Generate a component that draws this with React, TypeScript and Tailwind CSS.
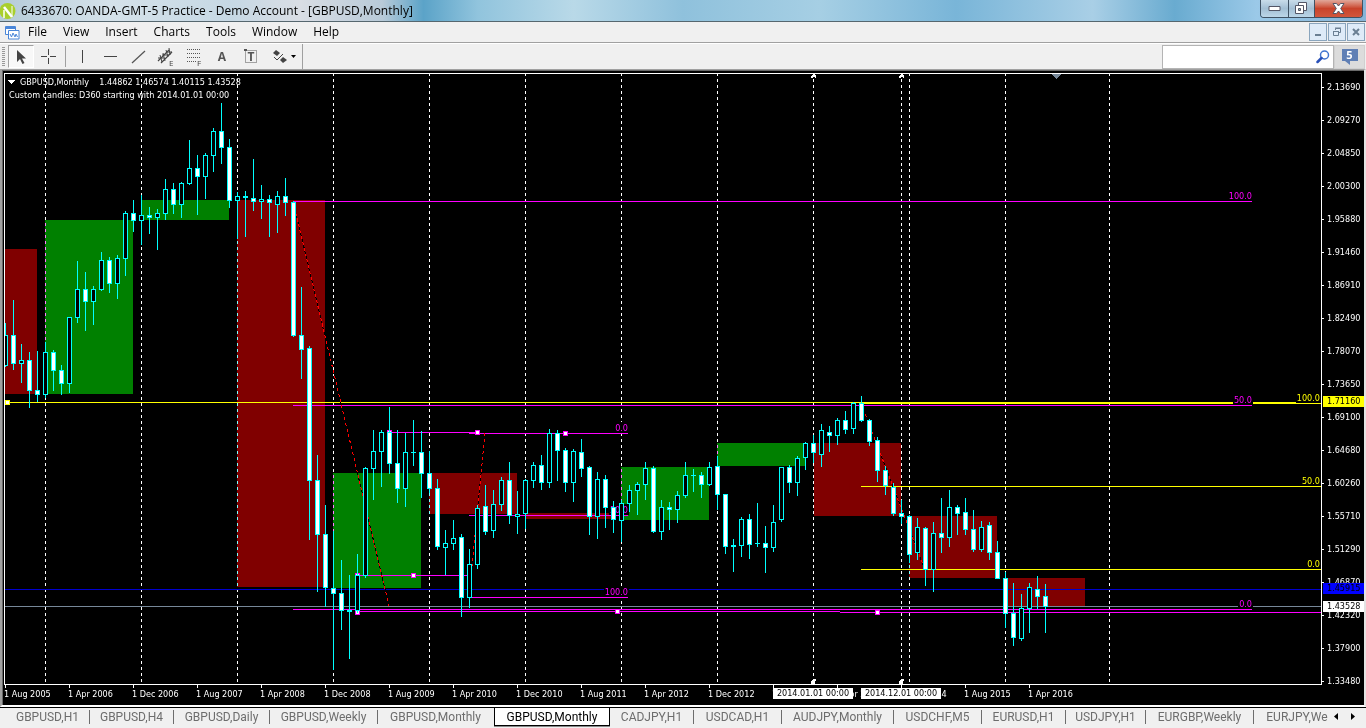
import { useState } from "react"

type Candle = [number, number, number, number, number]

// [high, body top, body bottom, low, kind] — kind: 0 = hollow (up), 1 = filled (down)
const candles: Candle[] = [
  [323, 335, 366, 367, 0], [300, 335, 364, 370, 1], [344, 360, 364, 383, 0], [352, 360, 391, 408, 1],
  [351, 390, 395, 402, 1], [342, 352, 395, 398, 0], [350, 352, 371, 391, 1], [365, 370, 384, 395, 1],
  [317, 317, 384, 393, 0], [261, 289, 318, 323, 0], [272, 289, 302, 331, 1], [286, 289, 302, 325, 0],
  [252, 260, 290, 291, 0], [257, 260, 284, 293, 1], [255, 258, 284, 299, 0], [211, 213, 259, 276, 0],
  [200, 213, 221, 232, 1], [195, 215, 221, 245, 0], [207, 215, 218, 234, 1], [209, 213, 218, 250, 0],
  [179, 189, 214, 220, 0], [183, 189, 205, 214, 1], [182, 183, 205, 218, 0], [140, 168, 184, 185, 0],
  [155, 168, 177, 215, 1], [153, 155, 177, 199, 0], [128, 131, 156, 172, 0], [103, 131, 148, 164, 1],
  [139, 147, 201, 208, 1], [192, 196, 201, 239, 0], [191, 196, 198, 237, 0], [159, 198, 202, 211, 1],
  [185, 199, 202, 219, 0], [195, 199, 203, 237, 1], [191, 196, 205, 233, 0], [178, 196, 203, 216, 1],
  [201, 202, 336, 337, 1], [287, 335, 350, 379, 1], [346, 348, 481, 540, 1], [455, 480, 535, 592, 1],
  [505, 534, 588, 607, 1], [531, 588, 594, 670, 1], [560, 593, 611, 630, 1], [575, 610, 612, 659, 0],
  [554, 575, 611, 613, 0], [467, 468, 576, 578, 0], [430, 451, 469, 500, 0], [430, 432, 452, 487, 0],
  [407, 432, 464, 474, 1], [430, 463, 489, 503, 1], [433, 452, 489, 507, 0], [420, 452, 453, 466, 0],
  [431, 452, 474, 498, 1], [451, 473, 489, 493, 1], [479, 488, 547, 550, 1], [530, 543, 548, 575, 0],
  [520, 538, 544, 550, 0], [534, 537, 598, 617, 1], [549, 564, 598, 608, 0], [505, 508, 565, 569, 0],
  [485, 506, 532, 535, 1], [490, 504, 531, 538, 0], [477, 480, 505, 511, 0], [462, 480, 516, 524, 1],
  [491, 514, 517, 534, 0], [479, 480, 514, 529, 0], [462, 465, 481, 488, 0], [455, 465, 483, 490, 1],
  [429, 433, 483, 488, 0], [430, 433, 451, 481, 1], [448, 450, 483, 492, 1], [449, 451, 483, 502, 0],
  [439, 452, 469, 477, 1], [466, 467, 517, 535, 1], [472, 479, 517, 539, 0], [475, 479, 508, 528, 1],
  [501, 507, 520, 533, 1], [500, 503, 521, 542, 0], [485, 490, 504, 512, 0], [482, 484, 491, 515, 0],
  [462, 468, 485, 500, 0], [466, 468, 532, 533, 1], [500, 507, 532, 540, 0], [502, 507, 510, 530, 1],
  [491, 495, 510, 523, 0], [462, 475, 496, 498, 0], [469, 475, 476, 492, 0], [472, 475, 485, 498, 1],
  [462, 467, 485, 486, 0], [456, 466, 495, 510, 1], [494, 494, 547, 554, 1], [539, 545, 547, 572, 0],
  [517, 519, 546, 557, 0], [514, 519, 545, 559, 1], [503, 543, 544, 547, 0], [526, 543, 548, 573, 1],
  [505, 522, 548, 552, 0], [467, 467, 520, 522, 0], [465, 467, 483, 493, 1], [456, 458, 483, 496, 0],
  [442, 443, 458, 470, 0], [435, 443, 453, 463, 1], [424, 430, 455, 467, 0], [426, 432, 436, 452, 1],
  [418, 420, 436, 445, 0], [411, 420, 430, 434, 1], [402, 403, 429, 434, 0], [396, 403, 421, 422, 1],
  [419, 420, 442, 446, 1], [437, 440, 471, 482, 1], [466, 470, 486, 495, 1], [483, 487, 514, 516, 1],
  [500, 513, 517, 524, 1], [515, 516, 555, 563, 1], [518, 527, 553, 560, 0], [527, 528, 570, 586, 1],
  [522, 533, 570, 592, 0], [498, 533, 538, 553, 1], [490, 507, 538, 547, 0], [505, 507, 514, 535, 1],
  [498, 512, 530, 535, 1], [510, 529, 550, 552, 1], [521, 527, 550, 552, 0], [522, 525, 553, 560, 1],
  [541, 552, 579, 579, 1], [572, 578, 614, 628, 1], [583, 613, 638, 646, 1], [594, 608, 639, 641, 0],
  [583, 587, 609, 633, 0], [576, 589, 597, 609, 1], [584, 596, 607, 633, 1],
]

const RED = "#800000"
const GREEN = "#008000"
const MAGENTA = "#ff00ff"
const YELLOW = "#ffff00"

// yearly custom candles: [x, width, top, bottom, colour]
const blocks: [number, number, number, number, string][] = [
  [5, 32, 249, 394, RED],
  [45, 88, 220, 394, GREEN],
  [141, 88, 200, 220, GREEN],
  [237, 88, 200, 587, RED],
  [333, 88, 473, 588, GREEN],
  [429, 88, 473, 514, RED],
  [525, 88, 513, 519, RED],
  [621, 88, 467, 520, GREEN],
  [717, 88, 443, 466, GREEN],
  [814, 87, 443, 516, RED],
  [909, 88, 516, 578, RED],
  [1005, 80, 578, 606, RED],
]

const periods = [45, 141, 237, 333, 429, 525, 621, 717, 813, 901, 909, 1005, 1109]

// [x1, x2, y, thickness, colour]
const levels: [number, number, number, number, string][] = [
  [5, 1321, 589, 1, "#0000cd"],
  [5, 1321, 606, 1, "#778899"],
  [5, 1321, 402, 1, YELLOW],
  [861, 1321, 402, 2, YELLOW],
  [861, 1321, 486, 1, YELLOW],
  [861, 1321, 569, 1, YELLOW],
  [293, 1252, 201, 1, MAGENTA],
  [293, 1252, 405, 1, MAGENTA],
  [293, 1252, 609, 1, MAGENTA],
  [357, 840, 611, 1, MAGENTA],
  [840, 1321, 612, 1, MAGENTA],
  [389, 478, 432, 1, MAGENTA],
  [469, 628, 433, 1, MAGENTA],
  [469, 628, 515, 1, MAGENTA],
  [357, 469, 575, 1, MAGENTA],
  [469, 628, 597, 1, MAGENTA],
]

// [right edge, line y, width, text, colour]
const levelLabels: [number, number, number, string, string][] = [
  [1252, 201, 24, "100.0", MAGENTA],
  [1252, 405, 19, "50.0", MAGENTA],
  [1252, 609, 14, "0.0", MAGENTA],
  [628, 433, 14, "0.0", MAGENTA],
  [628, 515, 19, "50.0", MAGENTA],
  [628, 597, 24, "100.0", MAGENTA],
  [1320, 403, 24, "100.0", YELLOW],
  [1320, 486, 19, "50.0", YELLOW],
  [1320, 569, 14, "0.0", YELLOW],
]

const handles: [number, number, string][] = [
  [7, 402, YELLOW],
  [389, 432, MAGENTA],
  [477, 432, MAGENTA],
  [565, 433, MAGENTA],
  [357, 575, MAGENTA],
  [413, 575, MAGENTA],
  [357, 612, MAGENTA],
  [617, 611, MAGENTA],
  [877, 612, MAGENTA],
]

const trends = [
  [293, 201, 389, 606],
  [469, 597, 485, 433],
  [861, 403, 925, 570],
]

const prices = [
  "2.13690", "2.09270", "2.04850", "2.00300", "1.95880", "1.91460", "1.86910", "1.82490", "1.78070", "1.73650",
  "1.69100", "1.64680", "1.60260", "1.55710", "1.51290", "1.46870", "1.42320", "1.37900", "1.33480",
]

const dates = [
  "1 Aug 2005", "1 Apr 2006", "1 Dec 2006", "1 Aug 2007", "1 Apr 2008", "1 Dec 2008", "1 Aug 2009", "1 Apr 2010",
  "1 Dec 2010", "1 Aug 2011", "1 Apr 2012", "1 Dec 2012", "1 Aug 2013", "1 Apr 2014", "1 Dec 2014", "1 Aug 2015",
  "1 Apr 2016",
]

const tabs = [
  { name: "GBPUSD,H1", width: "w-[84px]" },
  { name: "GBPUSD,H4", width: "w-[84px]" },
  { name: "GBPUSD,Daily", width: "w-[96px]" },
  { name: "GBPUSD,Weekly", width: "w-[108px]" },
  { name: "GBPUSD,Monthly", width: "w-[116px]" },
  { name: "GBPUSD,Monthly", width: "w-[116px]" },
  { name: "CADJPY,H1", width: "w-[84px]" },
  { name: "USDCAD,H1", width: "w-[88px]" },
  { name: "AUDJPY,Monthly", width: "w-[112px]" },
  { name: "USDCHF,M5", width: "w-[88px]" },
  { name: "EURUSD,H1", width: "w-[84px]" },
  { name: "USDJPY,H1", width: "w-[80px]" },
  { name: "EURGBP,Weekly", width: "w-[108px]" },
  { name: "EURJPY,Weekly", width: "w-[108px]" },
]

const menus = ["File", "View", "Insert", "Charts", "Tools", "Window", "Help"]

const tools = [
  {
    name: "Vertical line",
    icon: <path d="M10.500 4v13" stroke="#444" />,
  },
  {
    name: "Horizontal line",
    icon: <path d="M4 10.500h13" stroke="#444" />,
  },
  {
    name: "Trendline",
    icon: <path d="M4 17L17 5" stroke="#555" strokeWidth="1.2" />,
  },
  {
    name: "Equidistant channel",
    icon: (
      <>
        <path d="M2 15L13 4M5 17L16 6" stroke="#444" strokeWidth="1.2" />
        <path d="M4 9l2 7M7 7l2 8M10 4l2 7M13 2l1 7M2 12h6M6 9h7M10 6h6" stroke="#444" />
        <text x="13" y="20" fill="#444" className="text-[8px]">E</text>
      </>
    ),
  },
  {
    name: "Fibonacci retracement",
    icon: (
      <>
        <path d="M3 3.500h14M3 7.500h14M3 11.500h14M3 15.500h9" stroke="#555" strokeDasharray="1 1" />
        <text x="13" y="20" fill="#444" className="text-[8px]">F</text>
      </>
    ),
  },
  {
    name: "Text",
    icon: <text x="10" y="15" textAnchor="middle" fill="#555" className="text-[12px] font-bold">A</text>,
  },
  {
    name: "Text label",
    icon: (
      <>
        <path d="M5.500 4.500h11v12h-11z" stroke="#555" strokeDasharray="1 1" />
        <path d="M4 3h3v2h-3z" fill="#555" />
        <text x="11" y="15" textAnchor="middle" fill="#555" className="text-[12px] font-bold">T</text>
      </>
    ),
  },
]

function HeaderLogo() {
  return (
    <svg className="shrink-0" width="17" height="18" viewBox="0 0 17 18" aria-hidden="true">
      <circle cx="7.500" cy="9" r="8" fill="#a9cf2c" />
      <path d="M4 8v8" stroke="#fff" strokeWidth="1.500" />
      <path d="M4 5l8 10" stroke="#fff" strokeWidth="2.500" />
      <path d="M12 4v11" stroke="#fff" strokeWidth="1" />
    </svg>
  )
}

function TitleBar() {
  return (
    <header className="flex h-[22px] shrink-0 items-start justify-between border-b border-[#56676f] bg-[linear-gradient(90deg,#b5cbd8_0%,#d5e2ea_8%,#c6d8e4_17%,#d9dde4_22%,#b8cad8_28%,#5ba3c8_31%,#91c4dd_35%,#b9d9e8_42%,#8fc1dc_50%,#a6cfe4_60%,#79b5d8_70%,#a9cfe6_80%,#69abd0_86%,#9bc9e8_92%,#86b4d8_100%)]">
      <h1 className="flex items-center gap-1 pt-0.5 text-[12px] leading-[18px] text-black">
        <HeaderLogo />
        6433670: OANDA-GMT-5 Practice - Demo Account - [GBPUSD,Monthly]
      </h1>
      <div className="mr-[3px] flex h-[18px] overflow-hidden rounded-b border border-t-0 border-[#3f5264]">
        <button aria-label="Minimize" className="flex w-7 items-center justify-center border-r border-[#3f5264] bg-linear-to-b from-[#c9dcea] via-[#a3bfd4] to-[#bcd6e8]">
          <svg width="13" height="7" viewBox="0 0 13 7"><path d="M1 1.500h11v4H1z" fill="#fff" stroke="#535666" /></svg>
        </button>
        <button aria-label="Restore" className="flex w-[26px] items-center justify-center border-r border-[#3f5264] bg-linear-to-b from-[#c9dcea] via-[#a3bfd4] to-[#bcd6e8]">
          <svg width="13" height="13" viewBox="0 0 13 13" fill="#fff" stroke="#535666">
            <path d="M3.500 .5h8v8h-8z" />
            <path d="M.5 3.500h8v8h-8z" />
            <path d="M3.500 6.500h2v2h-2z" fill="#9bb" />
          </svg>
        </button>
        <button aria-label="Close" className="flex w-[47px] items-center justify-center bg-linear-to-b from-[#e0a79a] via-[#c8432b] to-[#d1563c]">
          <svg width="13" height="11" viewBox="0 0 13 11">
            <path d="M1 .5h3.500l2 2.500l2-2.500H12L8.700 5.500L12 10.500H8.500l-2-2.500l-2 2.500H1l3.300-5z" fill="#fff" stroke="#535666" />
          </svg>
        </button>
      </div>
    </header>
  )
}

function MenuBar() {
  const button = "flex h-[18px] w-[18px] items-center justify-center border border-[#8aa5bd] bg-[#deebf8]"
  return (
    <div className="flex h-[21px] shrink-0 items-center justify-between border-b border-[#a0a0a0] bg-[#f0f0f0]">
      <nav className="flex items-center text-[12px] leading-[18px] text-black">
        <svg className="mr-2 ml-[5px]" width="15" height="15" viewBox="0 0 15 15" fill="#fff" stroke="#4a86d8">
          <path d="M.5 1.500h10v8H.5z" />
          <path d="M.5 3h10" strokeWidth="2" />
          <path d="M3.500 5.500h10.500v8.500H3.500z" />
          <path d="M5 9l1.500 3L8 8l2 4l1-3l1.500 3" fill="none" />
        </svg>
        <div className="flex gap-4">
          {menus.map((menu) => (
            <button key={menu}>{menu}</button>
          ))}
        </div>
      </nav>
      <div className="flex gap-px pr-px">
        <button aria-label="Minimize chart" className={button}>
          <svg width="10" height="10" viewBox="0 0 10 10"><path d="M2 8h6" stroke="#6a7f93" strokeWidth="2" /></svg>
        </button>
        <button aria-label="Restore chart" className={button}>
          <svg width="10" height="10" viewBox="0 0 10 10" fill="none" stroke="#6a7f93">
            <path d="M3.500 3V1.500h5v4H7M3 1h6" />
            <path d="M1.500 4.500h5v4h-5zM1 4.500h6" />
          </svg>
        </button>
        <button aria-label="Close chart" className={button}>
          <svg width="10" height="10" viewBox="0 0 10 10"><path d="M2 2l6 6M8 2l-6 6" stroke="#6a7f93" strokeWidth="2" /></svg>
        </button>
      </div>
    </div>
  )
}

function ToolBar() {
  return (
    <div className="flex h-[26px] shrink-0 items-center justify-between border-t border-white bg-[#f0f0f0]">
      <div className="flex h-full items-center border-r border-[#a0a0a0]">
        <svg className="mr-[3px] ml-0.5" width="3" height="20" viewBox="0 0 3 20"><path d="M1.500 0v20" stroke="#999" strokeWidth="3" strokeDasharray="1 1" /></svg>
        <button aria-label="Cursor" className="flex h-[23px] w-[26px] items-center justify-center border border-[#a0a0a0] border-r-white border-b-white bg-[#f8f8f8]">
          <svg width="12" height="16" viewBox="0 0 12 16"><path d="M2 1v12l3-3l2.500 5l2-1L7 9.500h4z" fill="#444" /></svg>
        </button>
        <button aria-label="Crosshair" className="flex w-[28px] justify-center">
          <svg width="17" height="17" viewBox="0 0 17 17"><path d="M8.500 1v6M8.500 10v6M1 8.500h6M10 8.500h6" stroke="#444" /></svg>
        </button>
        <div className="mr-1.5 ml-[3px] h-[21px] w-px bg-[#a0a0a0]" />
        {tools.map((tool) => (
          <button key={tool.name} aria-label={tool.name} className="flex w-[28px] justify-start">
            <svg width="21" height="21" viewBox="0 0 21 21" fill="none">{tool.icon}</svg>
          </button>
        ))}
        <button aria-label="Arrows" className="flex items-center gap-1 pr-[6px] pl-1">
          <svg width="15" height="15" viewBox="0 0 15 15" fill="#444">
            <path d="M4 1l4 3l-3 3l-4-3z" />
            <path d="M11 8l4 3l-4 3l-3-3z" />
            <path d="M2 8l3 3l6-6" fill="none" stroke="#444" />
          </svg>
          <svg width="5" height="3" viewBox="0 0 5 3"><path d="M0 0h5L2.500 3z" /></svg>
        </button>
      </div>
      <div className="flex h-[24px] items-center pr-px">
        <div className="flex h-[24px] w-[172px] items-center border border-[#b4b4b4] bg-white pr-[3px]">
          <input aria-label="Search" className="min-w-0 flex-1 bg-transparent px-1 text-[12px] outline-none" />
          <svg width="14" height="14" viewBox="0 0 14 14" fill="none">
            <circle cx="8.500" cy="5" r="4" stroke="#3f74d0" strokeWidth="1.500" />
            <path d="M5.500 8L1.500 12" stroke="#2850b8" strokeWidth="2.500" strokeLinecap="round" />
          </svg>
        </div>
        <button className="flex h-[24px] w-[31px] items-center justify-center border border-[#d0d0d0] bg-[#dcdcdc]">
          <span className="relative mb-1 h-[12px] w-4 bg-[#5f7fb5] text-center text-[11px] leading-[12px] font-bold text-white">
            5
            <svg className="absolute top-[12px] left-[3px]" width="5" height="4" viewBox="0 0 5 4"><path d="M0 0h5v4z" fill="#5f7fb5" /></svg>
          </span>
        </button>
      </div>
    </div>
  )
}

function Plot() {
  return (
    <svg
      className="block min-h-0 w-full flex-1 bg-black"
      viewBox="4 73 1318 612"
      preserveAspectRatio="none"
      shapeRendering="crispEdges"
      role="img"
      aria-label="GBPUSD monthly candlestick chart"
    >
      {blocks.map(([x, w, top, bottom, fill]) => (
        <rect key={x} x={x} y={top} width={w} height={bottom - top} fill={fill} />
      ))}
      {periods.map((x) => (
        <line key={x} x1={x + 0.5} x2={x + 0.5} y1="73" y2="684" stroke="#fff" strokeDasharray="3 3" className="mix-blend-difference" />
      ))}
      {levels.map(([x1, x2, y, h, fill], i) => (
        <rect key={i} x={x1} y={y} width={x2 - x1} height={h} fill={fill} />
      ))}
      {trends.map(([x1, y1, x2, y2]) => (
        <g key={x1}>
          <line x1={x1} y1={y1} x2={x2} y2={y2} stroke="#000" />
          <line x1={x1} y1={y1} x2={x2} y2={y2} stroke="#f00" strokeDasharray="3 3" />
        </g>
      ))}
      {levelLabels.map(([right, y, w, text, fill]) => (
        <g key={`${right}-${y}`}>
          <rect x={right - w} y={y - 11} width={w + 1} height="11" fill="#000" />
          <text x={right} y={y - 2} fill={fill} textAnchor="end" className="text-[9px]">{text}</text>
        </g>
      ))}
      {handles.map(([x, y, stroke]) => (
        <g key={`${x}-${y}`}>
          <rect x={x - 2} y={y - 2} width="5" height="5" fill={stroke} />
          <rect x={x - 1} y={y - 1} width="3" height="3" fill="#fff" />
        </g>
      ))}
      {candles.map(([high, top, bottom, low, kind], i) => {
        const x = 5 + i * 8
        return (
          <g key={x}>
            <rect x={x} y={high} width="1" height={low - high} fill="#0ff" />
            <rect x={x - 2} y={top} width="5" height={bottom - top} fill="#0ff" />
            {bottom - top > 2 && (
              <rect x={x - 1} y={top + 1} width="3" height={bottom - top - 2} fill={kind ? "#fff" : "#000"} />
            )}
          </g>
        )
      })}
      {[813, 901].map((x) => (
        <path key={x} d={`M${x - 2} 78v-2l2-2h1l2 2v2h-1l-1-1h-1l-1 1zM${x - 2} 684v-3l2-2h3v2h-1v3z`} fill="#fff" />
      ))}
      <path d="M1052 74h9l-4 5h-1z" fill="#778899" />
      <path d="M4 73h1318v612H4zM5 74v610h1316V74z" fill="#fff" fillRule="evenodd" />
      <path d="M8 80h7l-3 4h-1z" fill="#fff" />
      <text x="20" y="85" fill="#fff" className="text-[9px]">{"GBPUSD,Monthly\u00a0\u00a0\u00a0 1.44862 1.46574 1.40115 1.43528"}</text>
      <text x="9" y="98" fill="#fff" className="text-[9px]">Custom candles: D360 starting with 2014.01.01 00:00</text>
    </svg>
  )
}

function TimeAxis() {
  return (
    <div className="relative flex h-[20px] shrink-0 overflow-hidden text-white">
      {dates.map((date) => (
        <div key={date} className="w-16 shrink-0">
          <div className="ml-px h-[3px] w-px bg-white" />
          <div className="leading-[12px] whitespace-nowrap">{date}</div>
        </div>
      ))}
      <div className="absolute top-[3px] left-[769px] w-[80px] bg-white text-center leading-[11px] text-black">2014.01.01 00:00</div>
      <div className="absolute top-[3px] left-[857px] w-[80px] bg-white text-center leading-[11px] text-black">2014.12.01 00:00</div>
    </div>
  )
}

function PriceAxis() {
  return (
    <div className="relative w-[42px] shrink-0 text-white">
      {prices.map((price) => (
        <div key={price} className="flex h-[33px] items-center gap-[3px]">
          <span className="h-px w-0.5 bg-white" />
          {price}
        </div>
      ))}
      <div className="absolute top-[325px] right-0 left-px bg-[#ffff00] pl-1 leading-[11px] text-black">1.71160</div>
      <div className="absolute top-[512px] right-0 left-px bg-[#0000ff] pl-1 leading-[11px] text-black">1.45915</div>
      <div className="absolute top-[530px] right-0 left-px bg-white pl-1 leading-[11px] text-black">1.43528</div>
    </div>
  )
}

function ChartTabs() {
  const [active, setActive] = useState(5)

  return (
    <div className="flex h-[21px] shrink-0 border-t border-black bg-[#f0f0f0] font-[Roboto,'Open_Sans',sans-serif]">
      <div className="flex min-w-0 flex-1 overflow-hidden pl-[6px] text-[12px] leading-[16px]">
        {tabs.map((tab, i) => (
          <div key={i} className={`flex shrink-0 items-start ${tab.width}`}>
            {i === active ? (
              <button className="h-[18px] w-full border-x border-b border-black bg-white whitespace-nowrap text-black shadow-[0_1px_0_#888]">
                {tab.name}
              </button>
            ) : (
              <button
                onClick={() => setActive(i)}
                className={`mt-0.5 h-[14px] w-full border-r leading-[14px] whitespace-nowrap text-[#6d6d6d] ${
                  i === active - 1 ? "border-transparent" : "border-[#6d6d6d]"
                }`}
              >
                {tab.name}
              </button>
            )}
          </div>
        ))}
      </div>
      <div className="flex w-[38px] items-start gap-[13px] pt-[5px] pl-[6px]">
        <button aria-label="Scroll tabs left">
          <svg width="4" height="7" viewBox="0 0 4 7"><path d="M4 0v7L0 3.500z" /></svg>
        </button>
        <button aria-label="Scroll tabs right">
          <svg width="4" height="7" viewBox="0 0 4 7"><path d="M0 0v7l4-3.500z" /></svg>
        </button>
      </div>
    </div>
  )
}

export default function App() {
  return (
    <div className="flex h-screen flex-col overflow-hidden bg-[#f0f0f0] font-['Open_Sans','Noto_Sans',sans-serif]">
      <TitleBar />
      <MenuBar />
      <ToolBar />
      <main className="flex min-h-0 flex-1 border-t border-r-2 border-b-2 border-l-2 border-[#a0a0a0] border-r-[#e3e3e3] border-b-white">
        <div className="flex min-w-0 flex-1 border-t border-l border-[#696969] bg-black font-['DejaVu_Sans_Condensed','DejaVu_Sans',sans-serif] text-[9px]">
          <div className="flex min-w-0 flex-1 flex-col pt-0.5 pl-px">
            <Plot />
            <TimeAxis />
          </div>
          <PriceAxis />
        </div>
      </main>
      <ChartTabs />
    </div>
  )
}
